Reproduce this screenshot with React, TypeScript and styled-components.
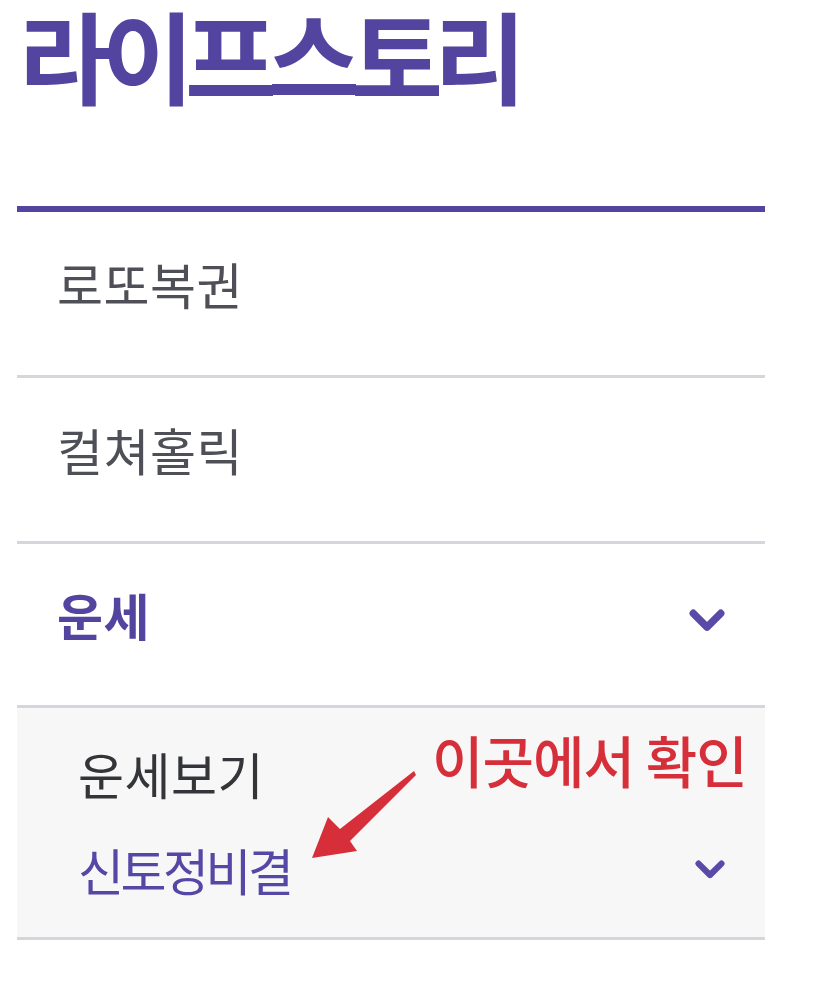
import React from "react";
import styled, { createGlobalStyle } from "styled-components";

const Global = createGlobalStyle`
  html, body { margin: 0; padding: 0; background: #ffffff; }
  body { font-family: "Noto Sans CJK KR", "Noto Sans", sans-serif; }
`;

const Page = styled.div`
  position: relative;
  width: 814px;
  min-height: 1004px;
  background: #fff;
  padding-top: 1px;
  box-sizing: border-box;
`;

const Nav = styled.nav`
  margin-left: 17px;
  width: 748px;
`;

const Header = styled.header`
  height: 205px;
  border-bottom: 6px solid #5344a0;
  box-sizing: content-box;
`;

const Title = styled.h1`
  margin: 0;
  padding: 0 0 0 2px;
  font-family: "Noto Sans CJK KR", sans-serif;
  font-weight: 700;
  font-size: 100px;
  line-height: 106px;
  letter-spacing: -9px;
  color: #5344a0;
  white-space: nowrap;
`;

const Row = styled.div<{ $height: number }>`
  height: ${(p) => p.$height}px;
  border-bottom: 3px solid #d3d6db;
  display: flex;
  align-items: center;
  justify-content: space-between;
  padding: 0 40px 22px 40px;
  box-sizing: content-box;
  & > * { flex: none; }
`;

const RowLabel = styled.span<{ $active?: boolean }>`
  font-family: "Noto Sans CJK KR", sans-serif;
  font-size: 50px;
  font-weight: ${(p) => (p.$active ? 700 : 400)};
  color: ${(p) => (p.$active ? "#5344a0" : "#4f5057")};
  letter-spacing: 0.5px;
`;

const SubPanel = styled.div`
  background: #f7f7f7;
  border-bottom: 3px solid #d3d6db;
  height: 232px;
  padding: 26px 40px 0 61px;
  box-sizing: border-box;
  display: flex;
  flex-direction: column;
  gap: 18px;
`;

const SubRow = styled.div`
  display: flex;
  align-items: center;
  justify-content: space-between;
  height: 78px;
`;

const SubLabel = styled.span<{ $active?: boolean }>`
  font-family: "Noto Sans CJK KR", sans-serif;
  font-size: 50px;
  font-weight: 400;
  color: ${(p) => (p.$active ? "#5547a5" : "#333538")};
  letter-spacing: ${(p) => (p.$active ? "-3.5px" : "0.5px")};
`;

const ChevronBox = styled.span<{ $offset: number }>`
  display: flex;
  margin-top: ${(p) => p.$offset}px;
`;

const Chevron = ({ size, offset = 0 }: { size: number; offset?: number }) => (
  <ChevronBox $offset={offset}>
    <svg width={size} height={size * 0.65} viewBox="0 0 34 22">
      <path d="M4 4 L17 17 L30 4" fill="none" stroke="#5a4aa8" strokeWidth="7" strokeLinecap="round" strokeLinejoin="round" />
    </svg>
  </ChevronBox>
);

const Note = styled.div`
  position: absolute;
  left: 432px;
  top: 726px;
  font-family: "Noto Sans CJK KR", sans-serif;
  font-weight: 500;
  font-size: 56px;
  line-height: 66px;
  color: #d62f3a;
  letter-spacing: -1px;
  white-space: nowrap;
`;

const Arrow = styled.svg`
  position: absolute;
  left: 300px;
  top: 760px;
`;

export default function App() {
  return (
    <Page>
      <Global />
      <Nav>
        <Header>
          <Title>라이프스토리</Title>
        </Header>
        <Row $height={141}>
          <RowLabel>로또복권</RowLabel>
        </Row>
        <Row $height={141}>
          <RowLabel>컬쳐홀릭</RowLabel>
        </Row>
        <Row $height={139}>
          <RowLabel $active>운세</RowLabel>
          <Chevron size={36} offset={14} />
        </Row>
        <SubPanel>
          <SubRow>
            <SubLabel>운세보기</SubLabel>
          </SubRow>
          <SubRow>
            <SubLabel $active>신토정비결</SubLabel>
            <Chevron size={30} offset={2} />
          </SubRow>
        </SubPanel>
      </Nav>
      <Note>이곳에서 확인</Note>
      <Arrow width="120" height="100" viewBox="0 0 120 100">
        <polygon points="114,11 116,15 50,81 57,91 12,98 28,57 40,69" fill="#d62f3a" />
      </Arrow>
    </Page>
  );
}
